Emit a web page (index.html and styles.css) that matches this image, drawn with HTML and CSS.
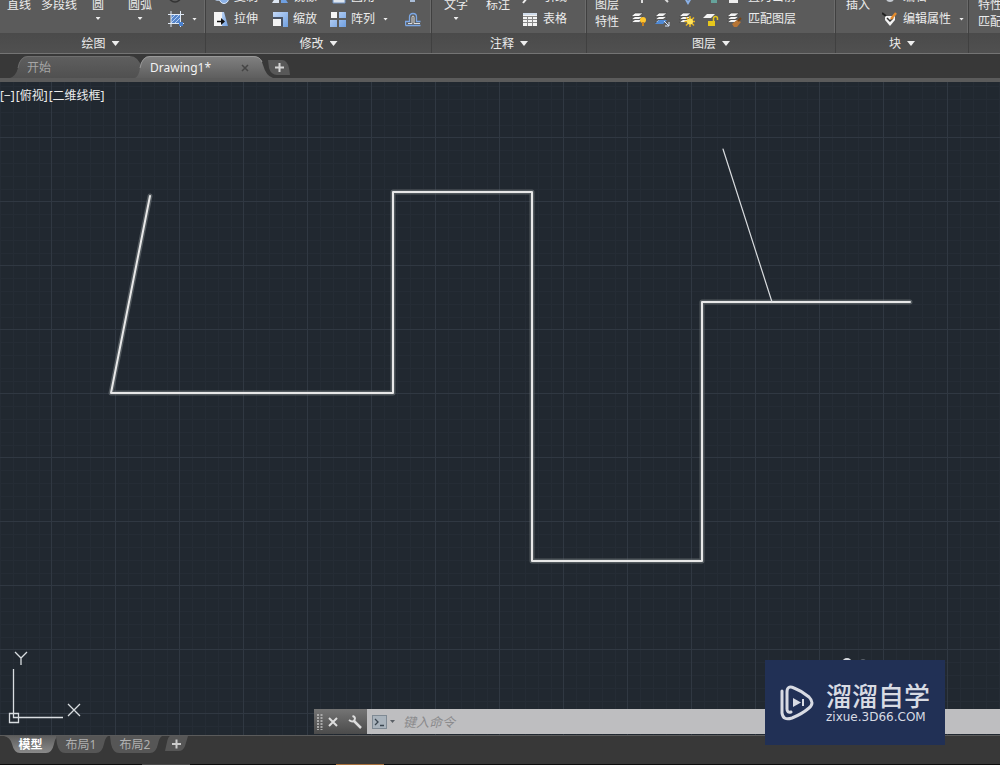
FILE: index.html
```html
<!DOCTYPE html>
<html lang="zh-CN">
<head>
<meta charset="utf-8">
<title>Drawing1</title>
<link rel="stylesheet" href="styles.css">
</head>
<body>
<svg class="defs" aria-hidden="true">
  <defs>
    <linearGradient id="blue" x1="0" y1="0" x2="1" y2="1"><stop offset="0" stop-color="#c4d9f7"/><stop offset="1" stop-color="#6f9fe0"/></linearGradient>
    <linearGradient id="tabOn" x1="0" y1="0" x2="0" y2="1"><stop offset="0" stop-color="#818181"/><stop offset="1" stop-color="#5e5e5e"/></linearGradient>
    <linearGradient id="tabOff" x1="0" y1="0" x2="0" y2="1"><stop offset="0" stop-color="#5f5f5f"/><stop offset="1" stop-color="#505050"/></linearGradient>
    <linearGradient id="sheetOn" x1="0" y1="0" x2="0" y2="1"><stop offset="0" stop-color="#5e5e5e"/><stop offset="1" stop-color="#8a8a8a"/></linearGradient>
    <symbol id="layers" viewBox="0 0 16 16">
      <path d="M4 8.500h8l-4 3H0z M4 5.500h8l-4 3H0z M4 2h8l-4 3.500H0z" fill="#f4f4f4" stroke="#444" stroke-width=".7"/>
    </symbol>
  </defs>
</svg>
<div class="app">
  <header class="ribbon">
    <section class="panel draw">
      <div class="tools">
        <button class="large">直线<span class="second"></span></button>
        <button class="large">多段线<span class="second"></span></button>
        <button class="large">圆<span class="second"><i class="caret"></i></span></button>
        <button class="large">圆弧<span class="second"><i class="caret"></i></span></button>
        <div class="stack">
          <button class="tool" aria-label="椭圆"><svg class="icon" viewBox="0 0 16 16"><circle cx="7" cy="7" r="6" fill="none" stroke="#333" stroke-width="1.500"/></svg></button>
          <button class="tool" aria-label="图案填充"><svg class="icon" viewBox="0 0 16 16"><rect x="3" y="3" width="10" height="10" fill="#5685c9"/><path d="M3 8l5-5M3 12l9-9M6 13l7-7M10 13l3-3" stroke="#b5d0f5"/><path d="M3 0v16M12.500 0v16M0 3.500h16M0 12.500h16" stroke="#dfe9f5" fill="none"/><path d="M11 11h4v4h-4z" fill="#4a80cd"/></svg><i class="caret"></i></button>
        </div>
      </div>
      <button class="title">绘图<i class="arrow"></i></button>
    </section>
    <section class="panel modify">
      <div class="tools">
        <div class="stack">
          <button class="tool"><svg class="icon" viewBox="0 0 16 16"><circle cx="5" cy="8" r="4" fill="#a9bdd8"/><circle cx="11" cy="10" r="4.500" fill="#8ab0e5" stroke="#dce9fa"/></svg>复制</button>
          <button class="tool"><svg class="icon" viewBox="0 0 16 16"><path d="M8 1h3l4 14H8z" fill="url(#blue)"/><path d="M1 1h8v14H1z" fill="#f5f5f5"/><path d="M4 10.500h6" stroke="#111" stroke-width="1.500"/><path d="M8 7l4 3.500L8 14z" fill="#111"/></svg>拉伸</button>
        </div>
        <div class="stack">
          <button class="tool"><svg class="icon" viewBox="0 0 16 16"><path d="M7 3v11H0z" fill="#dde6f2"/><path d="M9 3v11h7z" fill="#6f9fe0"/></svg>镜像</button>
          <button class="tool"><svg class="icon" viewBox="0 0 16 16"><path d="M1 1h15v15h-5V6H1z" fill="url(#blue)"/><rect x="1" y="8" width="8" height="7" fill="#f2f2f2"/><path d="M1 7h9v8" fill="none" stroke="#374d70"/></svg>缩放</button>
        </div>
        <div class="stack">
          <button class="tool"><svg class="icon" viewBox="0 0 16 16"><path d="M3 3h12v11H3z" fill="#dfe6ee" stroke="#7194c5"/></svg>圆角</button>
          <button class="tool"><svg class="icon" viewBox="0 0 16 16"><rect x="1" y="1" width="6" height="6" fill="#f5f5f5"/><path d="M9 1h7v6H9zM0 9h7v7H0zM9 9h7v7H9z" fill="url(#blue)"/></svg>阵列<i class="caret"></i></button>
        </div>
        <div class="stack">
          <button class="tool" aria-label="分解"><svg class="icon" viewBox="0 0 16 16"><rect x="5" y="6" width="5" height="7" fill="#a9bdd8"/></svg></button>
          <button class="tool" aria-label="偏移"><svg class="icon" viewBox="0 0 16 16"><path d="M.5 14.500h15M.5 14.500v-4h4V6q0-3.500 3.500-3.500T11.500 6v4.500h4" fill="none" stroke="#7ba7e5" stroke-width="1.300"/><path d="M3 12.500h4V6.500q0-1.500 1-1.500t1 1.500v6h6" fill="none" stroke="#ddd"/></svg></button>
        </div>
      </div>
      <button class="title">修改<i class="arrow"></i></button>
    </section>
    <section class="panel annotate">
      <div class="tools">
        <button class="large">文字<span class="second"><i class="caret"></i></span></button>
        <button class="large">标注<span class="second"></span></button>
        <div class="stack">
          <button class="tool"><svg class="icon" viewBox="0 0 16 16"><path d="M1 14l4-5" stroke="#eee" stroke-width="2"/></svg>引线</button>
          <button class="tool"><svg class="icon" viewBox="0 0 16 16"><rect x="1" y="2" width="14" height="13" fill="#f4f4f4"/><path d="M1 5.500h14M1 8.500h14M1 11.500h14M5.500 5v10M10.500 5v10" stroke="#888"/><path d="M1 2h14v2H1z" fill="#cfdbea"/></svg>表格</button>
        </div>
      </div>
      <button class="title">注释<i class="arrow"></i></button>
    </section>
    <section class="panel layer">
      <div class="tools">
        <button class="large">图层<span class="second">特性</span></button>
        <div class="stack">
          <div class="row">
            <button class="tool" aria-label="关闭"><svg class="icon" viewBox="0 0 16 16"><path d="M11 9v5" stroke="#ddd" stroke-width="2"/></svg></button>
            <button class="tool" aria-label="隔离"><svg class="icon" viewBox="0 0 16 16"><path d="M9 9l4 4" stroke="#ddd" stroke-width="2"/></svg></button>
            <button class="tool" aria-label="冻结"><svg class="icon" viewBox="0 0 16 16"><path d="M6 9l3 5 3-5" fill="none" stroke="#8ab0e5" stroke-width="2"/></svg></button>
            <button class="tool" aria-label="锁定"><svg class="icon" viewBox="0 0 16 16"><rect x="8" y="8" width="6" height="6" fill="#66a39b"/></svg></button>
            <button class="tool"><svg class="icon" viewBox="0 0 16 16"><path d="M2 7h9v7H2z" fill="#eee"/></svg>置为当前</button>
          </div>
          <div class="row">
            <button class="tool" aria-label="打开所有图层"><svg class="icon" viewBox="0 0 16 16"><use href="#layers"/><circle cx="12" cy="9" r="3" fill="#ffc62c"/><path d="M12 11v4" stroke="#c78120" stroke-width="2"/></svg></button>
            <button class="tool" aria-label="取消隔离"><svg class="icon" viewBox="0 0 16 16"><use href="#layers"/><path d="M4 9h8l-4 4H0z" fill="#4f8ad6"/><path d="M9 10l5 5m0-4v4h-4" fill="none" stroke="#d7e7ff"/></svg></button>
            <button class="tool" aria-label="解冻所有图层"><svg class="icon" viewBox="0 0 16 16"><use href="#layers"/><path d="M11 5v11M5.500 10.500h11M7 6.500l8 8M15 6.500l-8 8" stroke="#e9b51f" stroke-width="1.500"/><circle cx="11" cy="10.500" r="3" fill="#ffe45a"/></svg></button>
            <button class="tool" aria-label="解锁图层"><svg class="icon" viewBox="0 0 16 16"><path d="M4 3h8L8 7H0z" fill="#f4f4f4"/><rect x="5" y="10" width="7" height="5" fill="#e6c71c"/><path d="M10.500 10V7.500q0-2 2-2t2 2V9" fill="none" stroke="#e6c71c" stroke-width="1.500"/></svg></button>
            <button class="tool"><svg class="icon" viewBox="0 0 16 16"><use href="#layers"/><path d="M5 13l5-4 4 2-4 5H7z" fill="#b77535"/><path d="M11 10l3-3" stroke="#774313" stroke-width="2"/></svg>匹配图层</button>
          </div>
        </div>
      </div>
      <button class="title">图层<i class="arrow"></i></button>
    </section>
    <section class="panel block">
      <div class="tools">
        <button class="large">插入<span class="second"></span></button>
        <div class="stack">
          <button class="tool"><svg class="icon" viewBox="0 0 16 16"><circle cx="8" cy="9" r="4" fill="#c5cad1"/></svg>编辑</button>
          <button class="tool"><svg class="icon" viewBox="0 0 16 16"><path d="M3 5h10v4l-5 6-5-6z" fill="#f3f3f3"/><path d="M0 2l4 3" stroke="#222" stroke-width="2"/><path d="M5 7l3 3 3-3" fill="none" stroke="#333" stroke-width="1.500"/><path d="M9 8l5-6" stroke="#e38b2d" stroke-width="2.500"/></svg>编辑属性<i class="caret"></i></button>
        </div>
      </div>
      <button class="title">块<i class="arrow"></i></button>
    </section>
    <section class="panel props">
      <div class="tools"><button class="large">特性<span class="second">匹配</span></button></div>
      <div class="title"></div>
    </section>
  </header>

  <nav class="files">
    <button class="file"><svg class="shape" viewBox="0 0 132 22"><path d="M0 22Q6 20 8 12Q10 0 18 0H120Q128 0 132 12V22z" fill="url(#tabOff)"/><path d="M8 12Q10 .5 18 .5H120" fill="none" stroke="#6e6e6e"/></svg><span>开始</span></button>
    <button class="file on"><svg class="shape" viewBox="0 0 138 22"><path d="M0 22Q4 20 5 12Q7 0 15 0H118Q126 0 128 9Q131 20 138 22z" fill="url(#tabOn)"/><path d="M5 12Q7 .5 15 .5H118Q125 .5 127 6" fill="none" stroke="#999"/></svg><span>Drawing1*</span><svg class="close" viewBox="0 0 8 8"><path d="M1 1l6 6M7 1L1 7" stroke="#454545" stroke-width="1.500"/></svg></button>
    <button class="add" aria-label="新图形"><svg viewBox="0 0 24 16"><path d="M1 0H15Q20 0 22 8L23 15H10Q4 15 2 8z" fill="#585858"/><path d="M8 7.500h9M12.500 3v9" stroke="#d5d5d5" stroke-width="2"/></svg></button>
  </nav>

  <main class="canvas">
    <svg class="drawing" role="img" aria-label="图形">
      <defs>
        <pattern id="minor" width="64" height="64" x="51" y="55" patternUnits="userSpaceOnUse">
          <path d="M13.500 0v64M26.500 0v64M39.500 0v64M52.500 0v64M0 13.500h64M0 26.500h64M0 39.500h64M0 52.500h64" stroke="#252c35"/>
          <path d="M.5 0v64M0 .5h64" stroke="#303842"/>
        </pattern>
      </defs>
      <rect width="100%" height="100%" fill="url(#minor)"/>
      <circle cx="847" cy="581" r="5" fill="#d5d8dc"/>
      <circle cx="863" cy="580" r="3" fill="#59616b"/>
      <g fill="none" stroke-linejoin="round" stroke-linecap="round">
        <path d="M150 114L111 311H393V110H532V479H702V220H910" stroke="#6c7176" stroke-width="5" stroke-opacity=".65"/>
        <path d="M150 114L111 311H393V110H532V479H702V220H910" stroke="#e8e8e8" stroke-width="2"/>
        <path d="M723 67L772 220" stroke="#d8dbde" stroke-width="1.200"/>
      </g>
    </svg>
    <div class="view"><button>[−]</button><button>[俯视]</button><button>[二维线框]</button></div>
    <svg class="ucs" viewBox="0 0 84 76" aria-hidden="true"><g fill="none" stroke="#d9dde1" stroke-width="1.300"><path d="M13.500 20v48.500H63M9.500 64.500h9v9h-9zM15 3l6 6 6-6M21 9v7M68 55l12 12M80 55L68 67"/></g></svg>
    <form class="command">
      <div class="grip">
        <svg viewBox="0 0 6 16" class="dots"><path d="M1 0v16M4.500 0v16" stroke="#aaa" stroke-width="2" stroke-dasharray="2 1"/></svg>
        <button type="button" aria-label="关闭"><svg class="mini" viewBox="0 0 10 10"><path d="M1 1l8 8M9 1L1 9" stroke="#ddd" stroke-width="2"/></svg></button>
        <button type="button" class="custom" aria-label="自定义"><svg class="wrench" viewBox="0 0 14 14"><path d="M6 6l7 7" stroke="#ddd" stroke-width="2.500"/><path d="M4.500 1Q8 2 6.500 5T1 5" fill="none" stroke="#ddd" stroke-width="2"/></svg></button>
      </div>
      <button type="button" class="recent" aria-label="最近使用的命令"><svg class="prompt" viewBox="0 0 15 14"><rect x=".5" y=".5" width="14" height="13" fill="#a9b3bc" stroke="#7f8a94"/><path d="M3 4l3 3-3 3M8 10.500h4" fill="none" stroke="#3a4650" stroke-width="1.300"/></svg><i class="caret dark"></i></button>
      <input class="entry" type="text" aria-label="命令" placeholder="键入命令">
    </form>
  </main>

  <footer class="sheets">
    <button class="sheet on"><svg class="shape" viewBox="0 0 54 17"><path d="M0 0H54Q51 2 50 8Q48 17 42 17H16Q10 17 8 8Q6 1 0 0z" fill="url(#sheetOn)"/></svg><span>模型</span></button>
    <button class="sheet"><svg class="shape" viewBox="0 0 54 17"><path d="M2 0H54Q51 2 50 8Q48 17 42 17H11Q5 17 3 8z" fill="#565656"/></svg><span>布局1</span></button>
    <button class="sheet"><svg class="shape" viewBox="0 0 54 17"><path d="M2 0H54Q51 2 50 8Q48 17 42 17H11Q5 17 3 8z" fill="#565656"/></svg><span>布局2</span></button>
    <button class="newsheet" aria-label="新建布局"><svg viewBox="0 0 24 16"><path d="M6 0H24L21 10Q19 15 15 15H1L3 6Q4 1 6 0z" fill="#565656"/><path d="M8 8h9M12.500 3.500v9" stroke="#ccc" stroke-width="2"/></svg></button>
  </footer>
  <div class="taskbar"><span class="running"></span><span class="active"></span></div>

  <aside class="watermark">
    <svg class="logo" viewBox="0 0 34 36"><g fill="none" stroke="#d8dbe3" stroke-width="3" stroke-linecap="round" stroke-linejoin="round"><path d="M2 6V28Q3 36 12 33Q22 29 29 23Q35 18 29 12Q22 6 14 3Q7 0 7 7V24Q7 28 11 27"/></g><path d="M13 13l8 4.500-8 4.500z" fill="#d8dbe3"/><path d="M23 14v7" stroke="#d8dbe3" stroke-width="2"/></svg>
    <div class="brand"><strong>溜溜自学</strong><span>zixue.3D66.COM</span></div>
  </aside>
</div>
</body>
</html>
```
FILE: styles.css
```css
* { box-sizing: border-box; }
body {
  margin: 0;
  background: #383838;
  color: #ececec;
  font: 12px/16px "Noto Sans", "Noto Sans CJK SC", sans-serif;
}
button {
  margin: 0;
  padding: 0;
  border: 0;
  background: none;
  color: inherit;
  font: inherit;
  white-space: nowrap;
}
svg { display: block; flex: none; }
.defs { position: absolute; width: 0; height: 0; }
.app {
  position: relative;
  display: flex;
  flex-direction: column;
  height: 100vh;
  overflow: hidden;
}

/* Ribbon */
.ribbon {
  display: flex;
  flex: none;
  overflow: hidden;
  border-bottom: 1px solid #747474;
  background: #5b5b5b;
}
.panel {
  display: flex;
  flex: none;
  flex-direction: column;
  border-right: 1px solid #404040;
  box-shadow: inset -1px 0 #6b6b6b;
}
.draw { width: 206px; }
.modify { width: 226px; }
.annotate { width: 155px; }
.layer { width: 249px; }
.block { width: 133px; }
.props { flex: 1 0 0; border-right: 0; }
.tools {
  display: grid;
  grid-template-rows: 30px;
  align-items: end;
  justify-content: start;
  height: 33px;
}
.draw .tools { grid-template-columns: 38px 42px 36px 52px auto; }
.modify .tools { grid-template-columns: 59px 58px 75px auto; padding-left: 7px; }
.annotate .tools { grid-template-columns: 48px 42px auto; }
.layer .tools { grid-template-columns: 44px auto; }
.block .tools { grid-template-columns: 46px auto; }
.props .tools { padding-left: 9px; }
.large {
  display: flex;
  flex-direction: column;
  align-items: center;
  line-height: 17px;
}
.draw .large:nth-child(4) { margin-right: 4px; }
.annotate .large:nth-child(2) { margin-right: 6px; }
.layer .large { margin-right: 4px; }
.block .large { margin-right: 2px; }
.second { display: flex; justify-content: center; height: 17px; }
.second .caret { margin: 4px 0 0; }
.stack { display: flex; flex-direction: column; align-self: end; }
.row { display: flex; gap: 8px; }
.tool { display: flex; align-items: center; gap: 5px; height: 22px; }
.icon { width: 16px; height: 16px; }
.caret {
  width: 5px;
  height: 3px;
  margin-left: 3px;
  background: #eee;
  clip-path: polygon(0 0, 100% 0, 50% 100%);
}
.dark { background: #5b6066; }
.arrow {
  width: 8px;
  height: 5px;
  background: #eee;
  clip-path: polygon(0 0, 100% 0, 50% 100%);
}
.title {
  display: flex;
  align-items: center;
  justify-content: center;
  gap: 6px;
  height: 20px;
  padding-top: 1px;
  background: linear-gradient(#4a4a4a, #505050);
}
.draw .title { padding-right: 4px; }

/* Drawing tabs */
.files {
  display: flex;
  flex: none;
  align-items: flex-end;
  height: 28px;
  padding-left: 10px;
  border-bottom: 4px solid #5b5b5b;
}
.file {
  position: relative;
  display: flex;
  align-items: center;
  width: 125px;
  height: 22px;
  padding: 2px 12px 0 17px;
  color: #a6a6a6;
}
.file.on { width: 132px; padding: 2px 18px 0 15px; color: #f2f2f2; justify-content: space-between; }
.file span, .sheet span { position: relative; }
.shape { position: absolute; left: 0; top: 0; height: 100%; }
.close { position: relative; width: 8px; height: 8px; }
.add svg, .newsheet svg { width: 24px; height: 16px; }
.add { padding-bottom: 2px; }

/* Model space */
.canvas {
  position: relative;
  flex: 1;
  min-height: 0;
  overflow: hidden;
  background: #212830;
}
.drawing { width: 100%; height: 100%; }
.view { position: absolute; left: 0; top: 6px; display: flex; gap: 1px; }
.ucs { position: absolute; left: 0; bottom: 10px; width: 84px; height: 76px; }
.command {
  position: absolute;
  left: 314px;
  right: 0;
  bottom: 1px;
  display: flex;
  height: 25px;
  background: #bebec0;
}
.grip {
  display: flex;
  align-items: center;
  gap: 5px;
  width: 53px;
  padding-left: 3px;
  background: linear-gradient(#747474, #4b4b4b);
}
.dots { width: 6px; height: 16px; }
.mini { width: 10px; height: 10px; }
.custom { margin-left: 5px; }
.wrench { width: 14px; height: 14px; }
.recent { display: flex; align-items: center; padding-left: 5px; }
.prompt { width: 15px; height: 14px; }
.entry {
  flex: 1;
  min-width: 0;
  padding: 0 8px;
  border: 0;
  outline: 0;
  background: none;
  color: #333;
  font: italic 13px/16px "Noto Sans", "Noto Sans CJK SC", sans-serif;
}
.entry::placeholder { color: #8b8b8d; opacity: 1; }

/* Layout tabs */
.sheets {
  display: flex;
  flex: none;
  align-items: flex-start;
  height: 29px;
  padding-left: 4px;
  border-top: 1px solid #5b5b5b;
}
.sheet {
  position: relative;
  width: 54px;
  height: 17px;
  color: #b0b0b0;
}
.sheet.on { width: 50px; padding-left: 3px; color: #fff; font-weight: 700; }
.newsheet { padding-left: 2px; }
.taskbar {
  display: flex;
  flex: none;
  gap: 146px;
  height: 1px;
  padding-left: 142px;
  background: #0c0c0c;
}
.running { width: 48px; background: #4a4a4a; }
.active { width: 48px; background: #a8713d; }

.watermark {
  position: absolute;
  right: 55px;
  bottom: 20px;
  display: flex;
  align-items: center;
  gap: 12px;
  width: 180px;
  height: 85px;
  padding-left: 15px;
  background: #213055;
  color: #d8dbe3;
}
.logo { width: 34px; height: 36px; }
.brand { display: flex; flex-direction: column; }
.brand strong { font-size: 26px; line-height: 28px; font-weight: 500; }
.brand span { font: 12px/14px "DejaVu Sans", sans-serif; }
```
